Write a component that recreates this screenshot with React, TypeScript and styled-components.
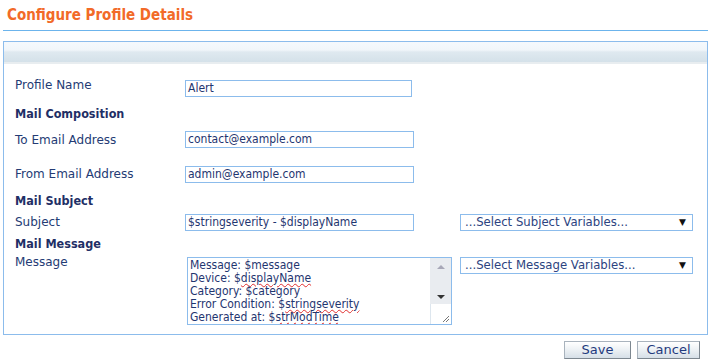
import React from 'react';
import styled, { createGlobalStyle } from 'styled-components';

const GlobalStyle = createGlobalStyle`
    html, body {
        margin: 0;
        padding: 0;
        background: #ffffff;
    }
    body {
        font-family: 'DejaVu Sans', Verdana, sans-serif;
        font-size: 12px;
        color: #243b74;
    }
`;

const Page = styled.div`
    width: 712px;
    height: 364px;
    padding: 0 4px 0 3px;
    box-sizing: border-box;
`;

const Title = styled.div`
    height: 31px;
    padding: 6px 0 0 4px;
    box-sizing: border-box;
    font-family: 'DejaVu Sans Condensed', 'DejaVu Sans', sans-serif;
    font-weight: bold;
    font-size: 15px;
    color: #f26a28;
    border-bottom: 1px solid #6cb4ec;
`;

const Panel = styled.div`
    margin-top: 10px;
    border: 1px solid #8cbcec;
    padding-bottom: 9px;
`;

const PanelHead = styled.div`
    height: 20px;
    background: linear-gradient(#f5f9fd 0%, #f1f6fa 40%, #dfe9f0 50%, #d4e1e9 100%);
    border-bottom: 2px solid #e8edf0;
`;

const Row = styled.div<{ $top: number }>`
    display: flex;
    align-items: flex-start;
    margin-top: ${(p) => p.$top}px;
    padding-left: 11px;
`;

const Label = styled.div<{ $shift?: number }>`
    width: 170px;
    flex: none;
    line-height: 17px;
    margin-top: ${(p) => p.$shift ?? 0}px;
`;

const Heading = styled.div<{ $top: number }>`
    margin-top: ${(p) => p.$top}px;
    padding-left: 11px;
    line-height: 14px;
    font-family: 'DejaVu Sans Condensed', 'DejaVu Sans', sans-serif;
    font-weight: bold;
    font-size: 12.5px;
    color: #1f2f66;
`;

const TextBox = styled.div<{ $w: number }>`
    width: ${(p) => p.$w}px;
    height: 17px;
    box-sizing: border-box;
    border: 1px solid #8cbcec;
    padding: 0 2px;
    font-family: 'DejaVu Sans Condensed', 'DejaVu Sans', sans-serif;
    font-size: 12px;
    line-height: 15px;
    color: #1f3670;
    white-space: nowrap;
    overflow: hidden;
`;

const Select = styled.div<{ $gap: number }>`
    width: 233px;
    height: 17px;
    box-sizing: border-box;
    margin-left: ${(p) => p.$gap}px;
    border: 1px solid #8cbcec;
    padding: 0 4px;
    display: flex;
    align-items: center;
    justify-content: space-between;
    font-size: 11.7px;
    color: #2c4380;
    line-height: 15px;
`;

const Caret = styled.span`
    font-size: 9px;
    color: #111;
    margin-right: 2px;
`;

const Area = styled.div`
    width: 265px;
    height: 68px;
    box-sizing: border-box;
    margin-left: 2px;
    border: 1px solid #8cbcec;
    display: flex;
`;

const AreaText = styled.div`
    flex: 1;
    padding: 1px 2px 0;
    font-family: 'DejaVu Sans Condensed', 'DejaVu Sans', sans-serif;
    font-size: 12px;
    line-height: 13px;
    color: #1f3670;
    white-space: nowrap;
    overflow: hidden;
`;

const Squiggle = styled.span`
    text-decoration: underline wavy #e03030;
    text-decoration-thickness: 1px;
    text-underline-offset: 1px;
`;

const ScrollBar = styled.div`
    width: 21px;
    flex: none;
    display: flex;
    flex-direction: column;
`;

const Track = styled.div`
    height: 46px;
    background: #e9ecf0;
    display: flex;
    flex-direction: column;
    align-items: center;
    justify-content: space-between;
    padding: 7px 0 5px;
    box-sizing: border-box;
`;

const Arrow = styled.div<{ $down?: boolean; $color: string }>`
    width: 0;
    height: 0;
    border-left: 4px solid transparent;
    border-right: 4px solid transparent;
    ${(p) =>
        p.$down
            ? `border-top: 4px solid ${p.$color};`
            : `border-bottom: 4px solid ${p.$color};`}
`;

const Grip = styled.div`
    flex: 1;
    border-left: 1px solid #dde6ee;
    display: flex;
    align-items: flex-end;
    justify-content: flex-end;
    padding: 0 2px 2px 0;
`;

const Buttons = styled.div`
    display: flex;
    justify-content: flex-end;
    gap: 6px;
    margin-top: 6px;
    padding-right: 8px;
`;

const Button = styled.button<{ $w: number }>`
    width: ${(p) => p.$w}px;
    height: 18px;
    padding: 0;
    border: 1px solid #a9b3bd;
    border-right-color: #7d8790;
    border-bottom-color: #7d8790;
    background: linear-gradient(#ffffff 0%, #eef2f5 45%, #d6dfe7 100%);
    font-family: 'DejaVu Sans', sans-serif;
    font-size: 13px;
    line-height: 16px;
    color: #1f3a7e;
`;

const messageLines: React.ReactNode[] = [
    'Message: $message',
    <>Device: $<Squiggle>displayName</Squiggle></>,
    'Category: $category',
    <>Error Condition: $<Squiggle>stringseverity</Squiggle></>,
    <>Generated at: $<Squiggle>strModTime</Squiggle></>,
];

export default function App() {
    return (
        <Page>
            <GlobalStyle />
            <Title>Configure Profile Details</Title>
            <Panel>
                <PanelHead />
                <Row $top={16}>
                    <Label $shift={-3}>Profile Name</Label>
                    <TextBox $w={227}>Alert</TextBox>
                </Row>
                <Heading $top={10}>Mail Composition</Heading>
                <Row $top={10}>
                    <Label $shift={1}>To Email Address</Label>
                    <TextBox $w={229}>contact@example.com</TextBox>
                </Row>
                <Row $top={17}>
                    <Label>From Email Address</Label>
                    <TextBox $w={229}>admin@example.com</TextBox>
                </Row>
                <Heading $top={11}>Mail Subject</Heading>
                <Row $top={6}>
                    <Label>Subject</Label>
                    <TextBox $w={229}>$stringseverity - $displayName</TextBox>
                    <Select $gap={46}>
                        <span>...Select Subject Variables...</span>
                        <Caret>▼</Caret>
                    </Select>
                </Row>
                <Heading $top={6}>Mail Message</Heading>
                <Row $top={6}>
                    <Label $shift={-3}>Message</Label>
                    <Area>
                        <AreaText>
                            {messageLines.map((l, i) => (
                                <div key={i}>{l}</div>
                            ))}
                        </AreaText>
                        <ScrollBar>
                            <Track>
                                <Arrow $color="#a8a8b8" />
                                <Arrow $down $color="#333" />
                            </Track>
                            <Grip>
                                <svg width="7" height="7" viewBox="0 0 7 7">
                                    <path d="M1 7L7 1M4 7L7 4" stroke="#777" strokeWidth="1" />
                                </svg>
                            </Grip>
                        </ScrollBar>
                    </Area>
                    <Select $gap={8}>
                        <span>...Select Message Variables...</span>
                        <Caret>▼</Caret>
                    </Select>
                </Row>
            </Panel>
            <Buttons>
                <Button $w={67}>Save</Button>
                <Button $w={63}>Cancel</Button>
            </Buttons>
        </Page>
    );
}
